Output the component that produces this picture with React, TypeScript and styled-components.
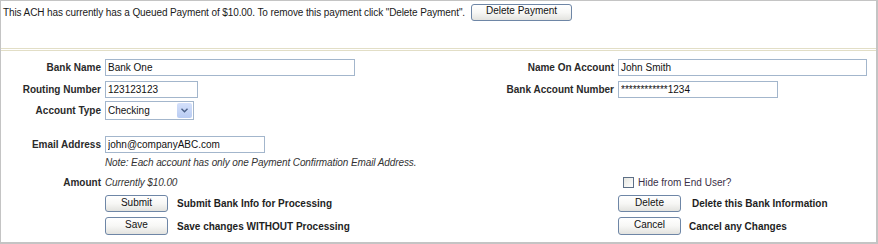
import styled, { createGlobalStyle } from "styled-components"

const Global = createGlobalStyle`
    body {
        margin: 0;
        background: #fff;
        font-family: "Liberation Sans", Arial, sans-serif;
        font-size: 10px;
        color: #222;
    }
    * { box-sizing: border-box; }
`

export default function App() {
    return (
        <>
            <Global />
            <Frame>
                <Header>
                    <Message>This ACH has currently has a Queued Payment of $10.00. To remove this payment click "Delete Payment".</Message>
                    <Button $w={101}>Delete Payment</Button>
                </Header>
                <Form>
                    <Row $top={0} $h={17}>
                        <Label>Bank Name</Label>
                        <Field><Input $w={250} defaultValue="Bank One" /></Field>
                        <Label>Name On Account</Label>
                        <Field><Input $w={249} defaultValue="John Smith" /></Field>
                    </Row>
                    <Row $top={5} $h={17}>
                        <Label>Routing Number</Label>
                        <Field><Input $w={93} defaultValue="123123123" /></Field>
                        <Label>Bank Account Number</Label>
                        <Field><Input $w={160} defaultValue="************1234" /></Field>
                    </Row>
                    <Row $top={3} $h={19}>
                        <Label>Account Type</Label>
                        <Field>
                            <SelectWrap>
                                <Select defaultValue="Checking">
                                    <option>Checking</option>
                                    <option>Savings</option>
                                </Select>
                                <Arrow>
                                    <svg width="7" height="5" viewBox="0 0 7 5">
                                        <path d="M0.5 0.8 L3.5 3.8 L6.5 0.8" fill="none" stroke="#4a5f86" strokeWidth="1.4" />
                                    </svg>
                                </Arrow>
                            </SelectWrap>
                        </Field>
                    </Row>
                    <Row $top={16} $h={17}>
                        <Label>Email Address</Label>
                        <Field><Input $w={160} defaultValue="john@companyABC.com" /></Field>
                    </Row>
                    <Row $top={3} $h={13}>
                        <span />
                        <Note>Note: Each account has only one Payment Confirmation Email Address.</Note>
                    </Row>
                    <Row $top={7} $h={13}>
                        <Label>Amount</Label>
                        <Note>Currently $10.00</Note>
                        <span />
                        <Check>
                            <Box type="checkbox" />
                            Hide from End User?
                        </Check>
                    </Row>
                    <Row $top={6} $h={17}>
                        <span />
                        <Action>
                            <Button $w={63}>Submit</Button>
                            <ActionText $gap={9}>Submit Bank Info for Processing</ActionText>
                        </Action>
                        <span />
                        <Action>
                            <Button $w={63}>Delete</Button>
                            <ActionText $gap={11}>Delete this Bank Information</ActionText>
                        </Action>
                    </Row>
                    <Row $top={5} $h={18}>
                        <span />
                        <Action>
                            <Button $w={63} $h={18}>Save</Button>
                            <ActionText $gap={9}>Save changes WITHOUT Processing</ActionText>
                        </Action>
                        <span />
                        <Action>
                            <Button $w={63} $h={18}>Cancel</Button>
                            <ActionText $gap={8}>Cancel any Changes</ActionText>
                        </Action>
                    </Row>
                </Form>
            </Frame>
        </>
    )
}

const Frame = styled.div`
    width: 878px;
    height: 244px;
    border: 1px solid #c4c4c4;
    border-bottom-width: 2px;
    border-right-width: 2px;
`

const Header = styled.div`
    height: 47px;
    display: flex;
    align-items: center;
    gap: 6px;
    padding: 0 0 25px 2px;
    color: #1a1a1a;
`

const Message = styled.span`
    letter-spacing: -0.1px;
`

const Form = styled.div`
    border-top: 3px double #e2dec6;
    padding-top: 8px;
    display: flex;
    flex-direction: column;
`

const Row = styled.div<{ $top: number; $h: number }>`
    display: grid;
    grid-template-columns: 100px 300px 205px 1fr;
    column-gap: 4px;
    align-items: center;
    margin-top: ${p => p.$top}px;
    height: ${p => p.$h}px;
`

const Label = styled.span`
    font-weight: bold;
    text-align: right;
    color: #2a2a2a;
    white-space: nowrap;
`

const Field = styled.div`
    display: flex;
`

const Input = styled.input<{ $w: number }>`
    width: ${p => p.$w}px;
    height: 17px;
    border: 1px solid #a3b6cc;
    padding: 0 2px;
    font-family: "Liberation Sans", Arial, sans-serif;
    font-size: 10px;
    color: #111;
    outline: none;
`

const SelectWrap = styled.div`
    position: relative;
    width: 89px;
    height: 19px;
`

const Select = styled.select`
    appearance: none;
    width: 100%;
    height: 100%;
    border: 1px solid #a3b6cc;
    background: #fff;
    padding: 0 2px;
    font-family: "Liberation Sans", Arial, sans-serif;
    font-size: 10px;
    color: #111;
    outline: none;
`

const Arrow = styled.span`
    position: absolute;
    top: 2px;
    right: 2px;
    width: 15px;
    height: 15px;
    border-radius: 2px;
    background: linear-gradient(#d4e0fa, #b9ccf3);
    display: flex;
    align-items: center;
    justify-content: center;
    pointer-events: none;
`

const Note = styled.span`
    font-style: italic;
    color: #333;
    white-space: nowrap;
    letter-spacing: -0.1px;
`

const Check = styled.label`
    display: flex;
    align-items: center;
    gap: 4px;
    padding-left: 5px;
    color: #3a3048;
`

const Box = styled.input`
    appearance: none;
    margin: 0;
    width: 11px;
    height: 11px;
    border: 1px solid #5d6f86;
    background: linear-gradient(135deg, #e6e6e0, #fff);
`

const Action = styled.div`
    display: flex;
    align-items: center;
`

const ActionText = styled.span<{ $gap: number }>`
    margin-left: ${p => p.$gap}px;
    font-weight: bold;
    color: #1e1e1e;
    white-space: nowrap;
`

const Button = styled.button<{ $w: number; $h?: number }>`
    width: ${p => p.$w}px;
    height: ${p => p.$h ?? 17}px;
    flex-shrink: 0;
    padding: 0 0 2px;
    border: 1px solid #6e86a6;
    border-radius: 3px;
    background: linear-gradient(#ffffff 0%, #f7f7f5 50%, #e3e3df 100%);
    font-family: "Liberation Sans", Arial, sans-serif;
    font-size: 10px;
    color: #111;
    line-height: 1;
`
